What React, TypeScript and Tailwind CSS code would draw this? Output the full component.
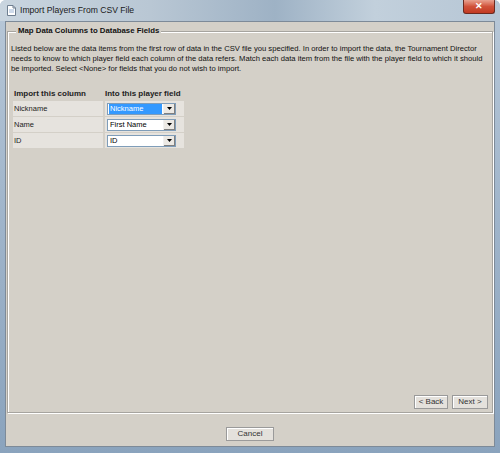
import React from "react";

const font = { fontFamily: "'Liberation Sans', Arial, sans-serif" };

function Combo({ value, selected }: { value: string; selected?: boolean }) {
  return (
    <div className="flex h-[12px] w-[69px] items-stretch border border-[#7f9db9] bg-white">
      <div className="flex flex-1 items-center px-[1px]">
        <span
          className={
            selected
              ? "flex h-full w-full items-center bg-[#3399ff] pl-[1px] text-white"
              : "pl-[1px] text-black"
          }
        >
          {value}
        </span>
      </div>
      <div className="flex w-[12px] items-center justify-center border-l border-[#f0f0f0] bg-[#ece9e4] shadow-[inset_-1px_-1px_0_#808080]">
        <svg width="5" height="3" viewBox="0 0 5 3">
          <path d="M0 0h5L2.5 3z" fill="#000" />
        </svg>
      </div>
    </div>
  );
}

function Btn({ label, w }: { label: string; w: string }) {
  return (
    <div
      className={`flex h-[14px] ${w} items-center justify-center border border-[#9a9a9a] bg-[#e4e1dc] text-[8px] text-[#333] shadow-[inset_1px_1px_0_#fff]`}
    >
      {label}
    </div>
  );
}

export default function App() {
  const rows = [
    { col: "Nickname", field: "Nickname", selected: true },
    { col: "Name", field: "First Name" },
    { col: "ID", field: "ID" },
  ];

  return (
    <div
      className="flex h-[453px] w-[500px] flex-col overflow-hidden rounded-t-[6px] bg-gradient-to-b from-[#b8c8d8] via-[#9fb4ca] to-[#8aa3bd] text-[8px] text-black"
      style={font}
    >
      {/* title bar */}
      <div className="relative flex h-[21px] items-center bg-[linear-gradient(90deg,#c9d5df_0%,#b9c7d4_30%,#9eb2c5_55%,#c2d0dc_75%,#b6c6d5_100%)] pl-[7px]">
        <svg width="9" height="11" viewBox="0 0 9 11" className="mt-[-1px]">
          <path d="M0.5 0.5h5.5l2.5 2.5v7.5h-8z" fill="#fff" stroke="#6f7f90" />
          <path d="M6 0.5v2.5h2.5" fill="none" stroke="#6f7f90" />
          <path d="M2 5h5M2 7h5" stroke="#9db6d6" />
        </svg>
        <span className="ml-[4px] text-[8.6px] text-[#1a1a1a]">Import Players From CSV File</span>
        <div className="absolute right-[5px] top-0 flex h-[14px] w-[32px] items-center justify-center rounded-b-[3px] border border-t-0 border-[#6b2a20] bg-gradient-to-b from-[#e8a190] via-[#d0513a] to-[#c23a22]">
          <span className="text-[9px] font-bold leading-none text-white">✕</span>
        </div>
      </div>

      {/* client area */}
      <div className="mx-[5px] mb-[6px] flex flex-1 flex-col border border-[#7d8a98] bg-[#d4d0c8]">
        {/* group box */}
        <div className="relative mx-[1px] mt-[9px] flex h-[382px] flex-col border border-[#a6a49f] shadow-[inset_1px_1px_0_#fff,1px_1px_0_#fff]">
          <div className="absolute left-[8px] top-[-6px] bg-[#d4d0c8] px-[2px] text-[7.8px] font-bold leading-[10px] text-[#111]">
            Map Data Columns to Database Fields
          </div>
          <div className="ml-[3px] mt-[12px] flex flex-col text-[7.65px] leading-[10px] whitespace-nowrap text-[#111]">
            <span>
              Listed below are the data items from the first row of data in the CSV file you specified. In order to import the data, the Tournament Director
            </span>
            <span>
              needs to know to which player field each column of the data refers. Match each data item from the file with the player field to which it should
            </span>
            <span>be imported. Select &lt;None&gt; for fields that you do not wish to import.</span>
          </div>

          <div className="ml-[5px] mt-[14px] flex w-[171px] flex-col whitespace-nowrap">
            <div className="flex h-[12px] items-center font-bold text-[#222]">
              <span className="w-[92px] pl-[1px]">Import this column</span>
              <span>Into this player field</span>
            </div>
            {rows.map((r) => (
              <div key={r.col} className="mt-[1px] flex h-[15px] gap-[2px]">
                <div className="flex w-[90px] items-center bg-[#e6e3de] pl-[1px] text-[7.5px] text-[#222]">{r.col}</div>
                <div className="flex flex-1 items-center bg-[#e6e3de] pl-[2px] text-[7.5px]">
                  <Combo value={r.field} selected={r.selected} />
                </div>
              </div>
            ))}
          </div>

          <div className="mt-auto mb-[3px] mr-[4px] flex justify-end gap-[4px]">
            <Btn label="< Back" w="w-[34px]" />
            <Btn label="Next >" w="w-[36px]" />
          </div>
        </div>

        <div className="mt-[14px] flex justify-center">
          <Btn label="Cancel" w="w-[48px]" />
        </div>
      </div>
    </div>
  );
}
